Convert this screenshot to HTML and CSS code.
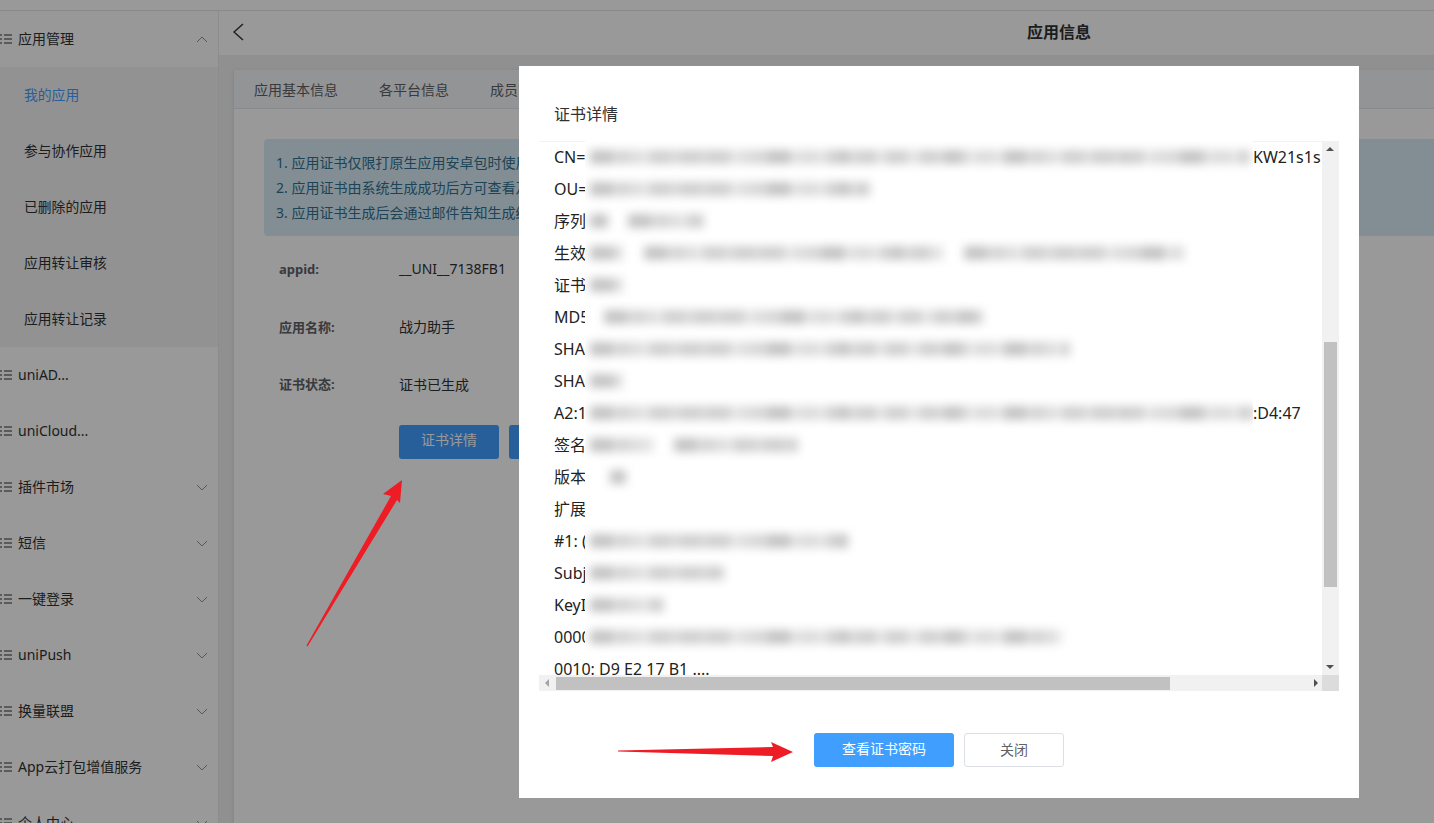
FILE: index.html
```html
<!DOCTYPE html>
<html lang="zh-CN">
<head>
  <meta charset="UTF-8" />
  <title>应用信息</title>
  <link rel="stylesheet" href="styles.css">
</head>
<body>

<svg width="0" height="0" class="defs">
  <symbol id="list" viewBox="0 0 12 10">
    <path d="M0 1h2M0 5h2M0 9h2M4 1h8M4 5h8M4 9h8" fill="none" stroke="currentColor" stroke-width="1"/>
  </symbol>
  <symbol id="down" viewBox="0 0 12 7">
    <path d="M1 1l5 5 5-5" fill="none" stroke="currentColor" stroke-width="1"/>
  </symbol>
  <symbol id="up" viewBox="0 0 12 7">
    <path d="M1 6l5-5 5 5" fill="none" stroke="currentColor" stroke-width="1"/>
  </symbol>
</svg>

<div class="app">
  <div class="top-strip"></div>
  <div class="layout">
    <aside class="sidebar">
      <div class="menu-title open">
        <svg class="list-icon"><use href="#list"/></svg><span>应用管理</span>
        <svg class="arrow-icon"><use href="#up"/></svg>
      </div>
      <div class="submenu">
        <div class="sub-item active">我的应用</div>
        <div class="sub-item">参与协作应用</div>
        <div class="sub-item">已删除的应用</div>
        <div class="sub-item">应用转让审核</div>
        <div class="sub-item">应用转让记录</div>
      </div>
      <div class="menu-title"><svg class="list-icon"><use href="#list"/></svg><span>uniAD...</span></div>
      <div class="menu-title"><svg class="list-icon"><use href="#list"/></svg><span>uniCloud...</span></div>
      <div class="menu-title"><svg class="list-icon"><use href="#list"/></svg><span>插件市场</span><svg class="arrow-icon"><use href="#down"/></svg></div>
      <div class="menu-title"><svg class="list-icon"><use href="#list"/></svg><span>短信</span><svg class="arrow-icon"><use href="#down"/></svg></div>
      <div class="menu-title"><svg class="list-icon"><use href="#list"/></svg><span>一键登录</span><svg class="arrow-icon"><use href="#down"/></svg></div>
      <div class="menu-title"><svg class="list-icon"><use href="#list"/></svg><span>uniPush</span><svg class="arrow-icon"><use href="#down"/></svg></div>
      <div class="menu-title"><svg class="list-icon"><use href="#list"/></svg><span>换量联盟</span><svg class="arrow-icon"><use href="#down"/></svg></div>
      <div class="menu-title"><svg class="list-icon"><use href="#list"/></svg><span>App云打包增值服务</span><svg class="arrow-icon"><use href="#down"/></svg></div>
      <div class="menu-title"><svg class="list-icon"><use href="#list"/></svg><span>个人中心</span><svg class="arrow-icon"><use href="#down"/></svg></div>
    </aside>

    <main class="main">
      <div class="navbar">
        <svg class="back" width="12" height="18" viewBox="0 0 12 18"><path d="M11 1L2 9l9 8" fill="none" stroke="#303133" stroke-width="1.4"/></svg>
        <h1 class="page-title">应用信息</h1>
      </div>
      <section class="card">
        <div class="tabs">
          <div class="tab">应用基本信息</div>
          <div class="tab">各平台信息</div>
          <div class="tab">成员管理</div>
        </div>
        <div class="card-body">
          <div class="alert">
            <p>1. 应用证书仅限打原生应用安卓包时使用</p>
            <p>2. 应用证书由系统生成成功后方可查看及下载</p>
            <p>3. 应用证书生成后会通过邮件告知生成结果</p>
          </div>
          <div class="info-row"><label>appid:</label><span>__UNI__7138FB1</span></div>
          <div class="info-row"><label>应用名称:</label><span>战力助手</span></div>
          <div class="info-row"><label>证书状态:</label><span>证书已生成</span></div>
          <div class="card-actions">
            <button class="btn-dark">证书详情</button>
            <button class="btn-dark"></button>
          </div>
        </div>
      </section>
    </main>
  </div>
</div>

<div class="overlay"></div>

<div class="modal">
  <div class="modal-title">证书详情</div>
  <div class="cert-box">
    <div class="cert-view">
      <div class="cert-line"><span>CN=</span><div class="mask"><i style="width:660px"></i></div><span>KW21s1s</span></div>
      <div class="cert-line"><span>OU=</span><div class="mask"><i style="width:280px"></i></div></div>
      <div class="cert-line"><span>序列</span><div class="mask"><i style="width:18px"></i><i style="margin-left:20px;width:76px"></i></div></div>
      <div class="cert-line"><span>生效</span><div class="mask"><i style="width:32px"></i><i style="margin-left:22px;width:298px"></i><i style="margin-left:22px;width:220px"></i></div></div>
      <div class="cert-line"><span>证书</span><div class="mask"><i style="width:32px"></i></div></div>
      <div class="cert-line"><span>MD5</span><div class="mask"><i style="margin-left:14px;width:380px"></i></div></div>
      <div class="cert-line"><span>SHA</span><div class="mask"><i style="width:480px"></i></div></div>
      <div class="cert-line"><span>SHA</span><div class="mask"><i style="width:32px"></i></div></div>
      <div class="cert-line"><span>A2:1</span><div class="mask"><i style="width:664px"></i></div><span>:D4:47</span></div>
      <div class="cert-line"><span>签名</span><div class="mask"><i style="width:62px"></i><i style="margin-left:22px;width:124px"></i></div></div>
      <div class="cert-line"><span>版本</span><div class="mask"><i style="margin-left:20px;width:16px"></i></div></div>
      <div class="cert-line"><span>扩展</span><div class="mask"></div></div>
      <div class="cert-line"><span>#1: (</span><div class="mask"><i style="width:258px"></i></div></div>
      <div class="cert-line"><span>Subj</span><div class="mask"><i style="width:134px"></i></div></div>
      <div class="cert-line"><span>KeyI</span><div class="mask"><i style="width:74px"></i></div></div>
      <div class="cert-line"><span>0000</span><div class="mask"><i style="width:472px"></i></div></div>
      <div class="cert-line last">0010: D9 E2 17 B1 ....</div>
    </div>
    <div class="vbar">
      <b class="tri tri-up"></b>
      <div class="vthumb"></div>
      <b class="tri tri-down"></b>
    </div>
    <div class="hbar">
      <b class="tri tri-left"></b>
      <div class="hthumb"></div>
      <b class="tri tri-right"></b>
    </div>
    <div class="corner"></div>
  </div>
  <div class="modal-footer">
    <button class="btn btn-primary">查看证书密码</button>
    <button class="btn btn-plain">关闭</button>
  </div>
</div>

<svg class="marks" width="1434" height="823" viewBox="0 0 1434 823">
  <polygon points="402,480 383,494 391,496 306.5,645.5 307.5,646.5 397,500 400,503" fill="#ee1c25"/>
  <polygon points="618,750.5 773,747 771,742 793,752 771,762 773,756 618,751.5" fill="#ee1c25"/>
</svg>

</body>
</html>
```

FILE: styles.css
```css
html, body {
  margin: 0;
  padding: 0;
  height: 100%;
  overflow: hidden;
}

body {
  font-family: "Noto Sans", "Noto Sans CJK SC", sans-serif;
  font-size: 14px;
  color: #303133;
  background: #fff;
}

.defs {
  position: absolute;
}

.app {
  width: 1899px;
}

.top-strip {
  height: 10px;
  background: #fff;
  border-bottom: 1px solid #e4e4e4;
}

.layout {
  display: flex;
}

/* SIDEBAR */
.sidebar {
  width: 218px;
  flex-shrink: 0;
  border-right: 1px solid #eaeaea;
  background: #fff;
}

.menu-title {
  height: 56px;
  line-height: 56px;
  display: flex;
  align-items: center;
  padding-right: 10px;
  color: #303133;
}

.menu-title.open {
  background: #fdfdfd;
}

.list-icon {
  width: 12px;
  height: 10px;
  margin-right: 6px;
  color: #303133;
  flex-shrink: 0;
}

.arrow-icon {
  width: 12px;
  height: 7px;
  margin-left: auto;
  color: #909399;
}

.submenu {
  background: #f4f4f5;
}

.sub-item {
  height: 56px;
  line-height: 56px;
  padding-left: 24px;
  font-size: 13.8px;
}

.sub-item.active {
  color: #409eff;
}

/* MAIN */
.main {
  flex: 1;
  background: #f0f0f0;
  height: 812px;
}

.navbar {
  height: 44px;
  background: #fff;
  position: relative;
  display: flex;
  align-items: center;
  justify-content: center;
}

.back {
  position: absolute;
  left: 13px;
  top: 12px;
}

.page-title {
  margin: 0;
  font-size: 16px;
  line-height: 42px;
  height: 44px;
  font-weight: 700;
}

.card {
  margin: 15px 0 0 15px;
  background: #fff;
  box-shadow: 0 1px 4px rgba(0,0,0,0.12);
  height: 760px;
}

.tabs {
  height: 38px;
  display: flex;
  align-items: center;
  background: #f5f7fa;
  border-bottom: 1px solid #e4e7ed;
  color: #606266;
}

.tab {
  padding: 0 20px;
  margin-right: 1px;
}

.card-body {
  padding: 30px;
}

.alert {
  background: #d9edf7;
  color: #31708f;
  border-radius: 4px;
  padding: 11px 12px;
  height: 75px;
  margin-bottom: 4px;
}

.alert p {
  margin: 0;
  line-height: 25px;
}

.info-row {
  display: flex;
  align-items: center;
  height: 57.5px;
  padding-left: 15px;
}

.info-row label {
  width: 120px;
  font-size: 13px;
  font-weight: 700;
  color: #606266;
}

.card-actions {
  margin-left: 135px;
  display: flex;
  gap: 10px;
  margin-top: 12px;
}

.btn-dark {
  width: 100px;
  height: 34px;
  border: none;
  border-radius: 3px;
  background: #409eff;
  color: #fff;
  font: inherit;
  line-height: 30px;
  padding: 0 0 4px;
}

.overlay {
  position: fixed;
  left: 0;
  top: 0;
  right: 0;
  bottom: 0;
  background: rgba(0,0,0,0.4);
}

/* MODAL */
.modal {
  position: absolute;
  left: 519px;
  top: 66px;
  width: 840px;
  height: 732px;
  background: #fff;
}

.modal-title {
  height: 75px;
  box-sizing: border-box;
  padding: 36px 0 0 35px;
  font-size: 16px;
  line-height: 24px;
}

.cert-box {
  margin: 0 20px;
  height: 550px;
  display: grid;
  grid-template-columns: 783px 17px;
  grid-template-rows: 534px 16px;
  box-shadow: inset 0 1px 0 #f2f2f2;
}

.cert-view {
  overflow: hidden;
  padding-left: 15px;
  font-size: 16px;
}

.cert-line {
  display: grid;
  grid-template-columns: 31px 668px max-content;
  height: 32px;
  line-height: 32px;
  white-space: nowrap;
  color: #222;
}

.cert-line.last {
  display: block;
}

.mask {
  background: #fff;
  display: flex;
  align-items: center;
  padding-left: 5px;
  overflow: hidden;
  height: 32px;
}

/* blurred-out certificate values */
.mask i {
  display: block;
  flex-shrink: 0;
  height: 14px;
  background:
    repeating-linear-gradient(90deg, rgba(0,0,0,0.1) 0 23px, transparent 23px 31px, rgba(0,0,0,0.05) 31px 52px, transparent 52px 59px),
    repeating-linear-gradient(90deg, rgba(0,0,0,0.06) 0 37px, transparent 37px 83px),
    #e8e8e8;
  filter: blur(5px);
}

.vbar {
  background: #f1f1f1;
  position: relative;
}

.vthumb {
  position: absolute;
  left: 2px;
  right: 2px;
  top: 201px;
  height: 245px;
  background: #c1c1c1;
}

.hbar {
  background: #f1f1f1;
  position: relative;
}

.hthumb {
  position: absolute;
  left: 17px;
  top: 2px;
  bottom: 1px;
  width: 614px;
  background: #c1c1c1;
}

.corner {
  background: #dcdcdc;
}

.tri {
  position: absolute;
  width: 0;
  height: 0;
  border: 4px solid transparent;
}

.tri-up {
  top: 6px;
  left: 4px;
  border-top: 0;
  border-bottom: 4px solid #505050;
}

.tri-down {
  bottom: 6px;
  left: 4px;
  border-bottom: 0;
  border-top: 4px solid #505050;
}

.tri-left {
  left: 6px;
  top: 4px;
  border-left: 0;
  border-right: 4px solid #a3a3a3;
}

.tri-right {
  right: 4px;
  top: 4px;
  border-right: 0;
  border-left: 4px solid #505050;
}

.modal-footer {
  margin-top: 42px;
  display: flex;
  justify-content: center;
  gap: 10px;
}

.btn {
  height: 34px;
  border-radius: 3px;
  font: inherit;
  font-size: 14px;
  line-height: 32px;
  padding: 0 0 2px;
}

.btn-primary {
  width: 140px;
  background: #409eff;
  color: #fff;
  border: none;
}

.btn-plain {
  width: 100px;
  background: #fff;
  color: #606266;
  border: 1px solid #dcdfe6;
}

.marks {
  position: absolute;
  left: 0;
  top: 0;
}
```
